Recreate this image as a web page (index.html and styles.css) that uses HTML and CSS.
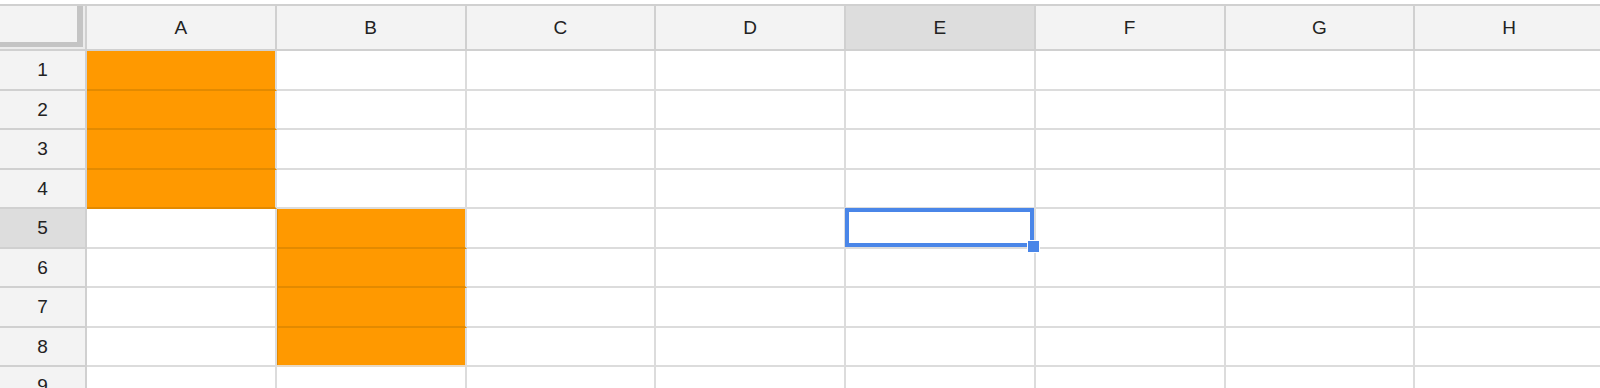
FILE: index.html
```html
<!DOCTYPE html>
<html lang="en">
<head>
<meta charset="utf-8">
<title>Sheet</title>
<link rel="stylesheet" href="styles.css">
</head>
<body>
<div class="sheet">
  <div class="corner"><div class="freeze"></div></div>
  <div class="col-head">A</div>
  <div class="col-head">B</div>
  <div class="col-head">C</div>
  <div class="col-head">D</div>
  <div class="col-head active">E</div>
  <div class="col-head">F</div>
  <div class="col-head">G</div>
  <div class="col-head">H</div>

  <div class="row-head">1</div>
  <div class="cell fill"></div><div class="cell"></div><div class="cell"></div><div class="cell"></div><div class="cell"></div><div class="cell"></div><div class="cell"></div><div class="cell"></div>

  <div class="row-head">2</div>
  <div class="cell fill"></div><div class="cell"></div><div class="cell"></div><div class="cell"></div><div class="cell"></div><div class="cell"></div><div class="cell"></div><div class="cell"></div>

  <div class="row-head">3</div>
  <div class="cell fill"></div><div class="cell"></div><div class="cell"></div><div class="cell"></div><div class="cell"></div><div class="cell"></div><div class="cell"></div><div class="cell"></div>

  <div class="row-head">4</div>
  <div class="cell fill"></div><div class="cell"></div><div class="cell"></div><div class="cell"></div><div class="cell"></div><div class="cell"></div><div class="cell"></div><div class="cell"></div>

  <div class="row-head active">5</div>
  <div class="cell"></div><div class="cell fill fill-left"></div><div class="cell"></div><div class="cell"></div>
  <div class="cell current"><div class="cursor"><span class="handle"></span></div></div>
  <div class="cell"></div><div class="cell"></div><div class="cell"></div>

  <div class="row-head">6</div>
  <div class="cell"></div><div class="cell fill fill-left"></div><div class="cell"></div><div class="cell"></div><div class="cell"></div><div class="cell"></div><div class="cell"></div><div class="cell"></div>

  <div class="row-head">7</div>
  <div class="cell"></div><div class="cell fill fill-left"></div><div class="cell"></div><div class="cell"></div><div class="cell"></div><div class="cell"></div><div class="cell"></div><div class="cell"></div>

  <div class="row-head">8</div>
  <div class="cell"></div><div class="cell fill fill-left fill-last"></div><div class="cell"></div><div class="cell"></div><div class="cell"></div><div class="cell"></div><div class="cell"></div><div class="cell"></div>

  <div class="row-head">9</div>
  <div class="cell"></div><div class="cell"></div><div class="cell"></div><div class="cell"></div><div class="cell"></div><div class="cell"></div><div class="cell"></div><div class="cell"></div>
</div>
</body>
</html>
```

FILE: styles.css
```css
html, body {
  margin: 0;
  padding: 0;
  background: #ffffff;
  overflow: hidden;
}

body {
  font-family: "Liberation Sans", Arial, sans-serif;
  font-size: 19px;
  color: #222222;
}

.sheet {
  margin-top: 4px;
  border-top: 2px solid #d0d0d0;
  display: grid;
  grid-template-columns: 87px repeat(8, 189.75px);
  grid-template-rows: 45px repeat(9, 39.5px);
  width: 1605px;
}

.sheet > div {
  box-sizing: border-box;
}

/* top-left corner with the freeze bars */
.corner {
  background: #ececec;
  border-right: 2px solid #d0d0d0;
  border-bottom: 2px solid #d0d0d0;
  padding: 0 2px 2px 0;
}

.freeze {
  height: 100%;
  box-sizing: border-box;
  background: #f3f3f3;
  border-right: 6px solid #c4c4c4;
  border-bottom: 5px solid #c4c4c4;
}

.col-head,
.row-head {
  background: #f3f3f3;
  border-right: 2px solid #d0d0d0;
  border-bottom: 2px solid #d0d0d0;
  display: flex;
  align-items: center;
  justify-content: center;
  line-height: 1;
}

.col-head.active,
.row-head.active {
  background: #dddddd;
}

.cell {
  background: #ffffff;
  border-right: 2px solid #dcdcdc;
  border-bottom: 2px solid #dcdcdc;
}

.fill {
  background: #ff9900;
  border-bottom-color: #e38a00;
}

.fill-left {
  box-shadow: inset 1px 0 0 #e38a00;
}

.fill-last {
  border-bottom-color: #e8d9c4;
}

/* active cell cursor */
.current {
  position: relative;
}

.cursor {
  position: absolute;
  left: -1px;
  top: -1px;
  right: 0;
  bottom: 0;
  border: 4px solid #4a86e8;
  box-sizing: border-box;
}

.handle {
  position: absolute;
  right: -10px;
  bottom: -10px;
  width: 11px;
  height: 11px;
  background: #4a86e8;
  border: 1px solid #ffffff;
}
```
